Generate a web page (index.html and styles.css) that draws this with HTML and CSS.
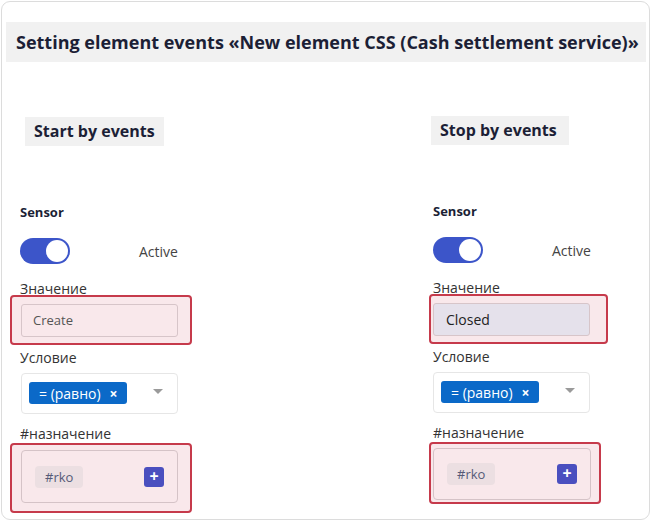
FILE: index.html
```html
<html lang="en">
<head>
    <meta charset="UTF-8">
    <meta name="viewport" content="width=device-width, initial-scale=1.0">
    <title>Events</title>
    <link rel="stylesheet" href="styles.css">
</head>
<body>
    <div class="card">
        <h1 class="title">Setting element events «New element CSS (Cash settlement service)»</h1>

        <div class="cols">
            <section class="col">
                <h2 class="col-head">Start by events</h2>
                <div class="sensor">Sensor</div>
                <div class="switch-row">
                    <span class="switch"><span class="knob"></span></span>
                    <span class="switch-text">Active</span>
                </div>

                <div class="label label--first">Значение</div>
                <div class="flag">
                    <div class="input">Create</div>
                </div>

                <div class="label label--mid">Условие</div>
                <div class="select">
                    <span class="chip">= (равно) <span class="chip-x">×</span></span>
                    <span class="arrow"></span>
                </div>

                <div class="label label--last">#назначение</div>
                <div class="flag flag--tags">
                    <div class="tags">
                        <span class="tag">#rko</span>
                        <span class="plus">+</span>
                    </div>
                </div>
            </section>

            <section class="col col--stop">
                <h2 class="col-head">Stop by events</h2>
                <div class="sensor">Sensor</div>
                <div class="switch-row">
                    <span class="switch"><span class="knob"></span></span>
                    <span class="switch-text">Active</span>
                </div>

                <div class="label label--first">Значение</div>
                <div class="flag">
                    <div class="input input--filled">Closed</div>
                </div>

                <div class="label label--mid">Условие</div>
                <div class="select">
                    <span class="chip">= (равно) <span class="chip-x">×</span></span>
                    <span class="arrow"></span>
                </div>

                <div class="label label--last">#назначение</div>
                <div class="flag flag--tags">
                    <div class="tags">
                        <span class="tag">#rko</span>
                        <span class="plus">+</span>
                    </div>
                </div>
            </section>
        </div>
    </div>
</body>
</html>
```

FILE: styles.css
```css
html,
body {
  margin: 0;
  background: #ffffff;
}

body {
  padding: 1px;
  font-family: "Open Sans", "Noto Sans", sans-serif;
  color: #333333;
}

.card {
  box-sizing: border-box;
  width: 649px;
  height: 519px;
  border: 1px solid #dcdcdc;
  border-radius: 9px;
  padding: 20px 2px 0 4px;
  overflow: hidden;
}

.title {
  margin: 0;
  width: 640px;
  height: 40px;
  line-height: 40px;
  padding-left: 10px;
  box-sizing: border-box;
  background: #f1f1f1;
  font-size: 18px;
  font-weight: 700;
  color: #1c1f36;
  white-space: nowrap;
}

.cols {
  display: grid;
  grid-template-columns: 413px 1fr;
  padding-left: 14px;
}

.col {
  display: flex;
  flex-direction: column;
  align-items: flex-start;
}

.col-head {
  margin: 55px 0 0 5px;
  padding: 0 9px;
  height: 29px;
  line-height: 29px;
  background: #f1f1f1;
  font-size: 16px;
  font-weight: 700;
  color: #1c1f36;
}

.col--stop .col-head {
  margin-top: 54px;
  margin-left: -2px;
  padding-right: 12px;
}

.sensor {
  margin-top: 58px;
  font-size: 13px;
  line-height: 17px;
  font-weight: 700;
  color: #1c1f36;
}

.switch-row {
  display: flex;
  align-items: center;
  margin-top: 17px;
}

.switch {
  display: flex;
  justify-content: flex-end;
  align-items: center;
  box-sizing: border-box;
  width: 50px;
  height: 26px;
  padding: 2px;
  border-radius: 13px;
  background: #3c55c9;
}

.knob {
  width: 22px;
  height: 22px;
  border-radius: 50%;
  background: #ffffff;
}

.switch-text {
  margin-left: 69px;
  font-size: 14px;
  color: #444444;
}

.label {
  font-size: 14px;
  line-height: 20px;
  color: #333333;
}

.label--first {
  margin-top: 15px;
}

.label--mid {
  margin-top: 3px;
}

.label--last {
  margin-top: 10px;
}

.flag {
  box-sizing: border-box;
  width: 182px;
  margin: -4px 0 0 -10px;
  padding: 7px 12px 6px 9px;
  border: 2px solid #c63a4b;
  border-radius: 4px;
  background: #f9e8eb;
}

.col--stop .flag {
  width: 179px;
  margin-left: -4px;
  padding-left: 2px;
  padding-right: 15px;
}

.flag--tags {
  margin-top: -1px;
  padding-top: 5px;
  padding-bottom: 8px;
}

.col--stop .flag--tags {
  width: 172px;
  padding-top: 4px;
  padding-bottom: 2px;
  padding-right: 8px;
}

.input {
  box-sizing: border-box;
  width: 157px;
  height: 33px;
  line-height: 31px;
  padding-left: 11px;
  border: 1px solid #d7c5c9;
  border-radius: 3px;
  font-size: 13px;
  color: #555555;
}

.input--filled {
  background: #e5e1eb;
  color: #222222;
  font-size: 14px;
  padding-left: 12px;
}

.select {
  position: relative;
  box-sizing: border-box;
  width: 157px;
  height: 41px;
  margin: 5px 0 0 1px;
  padding: 8px 7px;
  border: 1px solid #e6e6e6;
  border-radius: 4px;
  background: #ffffff;
}

.col--stop .select {
  margin-left: 0;
}

.chip {
  display: inline-flex;
  align-items: center;
  height: 22px;
  padding: 0 9px 0 10px;
  border-radius: 3px;
  background: #0b69c8;
  color: #ffffff;
  font-size: 14px;
}

.chip-x {
  margin-left: 9px;
  font-size: 14px;
  font-weight: 700;
}

.arrow {
  position: absolute;
  top: 15px;
  right: 14px;
  width: 0;
  height: 0;
  border-left: 5px solid transparent;
  border-right: 5px solid transparent;
  border-top: 5px solid #9a9a9a;
}

.tags {
  display: flex;
  align-items: center;
  justify-content: space-between;
  box-sizing: border-box;
  width: 157px;
  height: 53px;
  padding: 0 13px;
  border: 1px solid #d5c3c7;
  border-radius: 4px;
}

.col--stop .tags {
  width: 158px;
  height: 52px;
}

.tag {
  padding: 0 10px;
  height: 22px;
  line-height: 22px;
  border-radius: 4px;
  background: #ecdfe2;
  font-size: 13px;
  color: #555a78;
}

.plus {
  width: 20px;
  height: 20px;
  line-height: 19px;
  text-align: center;
  border-radius: 3px;
  background: #4a4fbf;
  color: #ffffff;
  font-size: 16px;
  font-weight: 700;
}
```
